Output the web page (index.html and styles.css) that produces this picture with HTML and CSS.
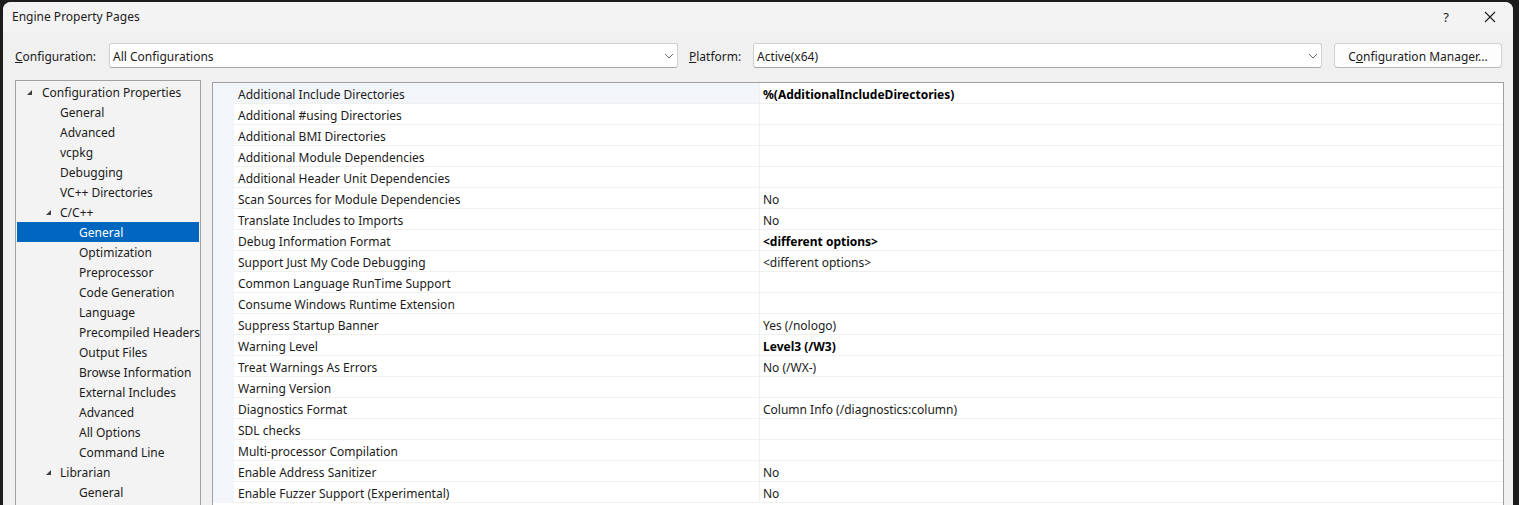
FILE: index.html
```html
<!DOCTYPE html>
<html>
<head>
<meta charset="utf-8">
<link rel="stylesheet" href="styles.css">
</head>
<body>
<div class="dialog">
  <div class="titlebar">
    <span class="title">Engine Property Pages</span>
    <span class="tb-btns">
      <span class="help">?</span>
      <svg class="close" width="12" height="12" viewBox="0 0 12 12"><path d="M1 1 L11 11 M11 1 L1 11" stroke="#1a1a1a" stroke-width="1.1" fill="none"/></svg>
    </span>
  </div>
  <div class="toolbar">
    <span class="label label-config"><u>C</u>onfiguration:</span>
    <div class="combo combo-config"><span class="combo-text">All Configurations</span>
      <svg class="chev" width="10" height="6" viewBox="0 0 10 6"><path d="M1 1 L5 5 L9 1" stroke="#6a6a6a" stroke-width="1" fill="none"/></svg>
    </div>
    <span class="label label-platform"><u>P</u>latform:</span>
    <div class="combo combo-platform"><span class="combo-text">Active(x64)</span>
      <svg class="chev" width="10" height="6" viewBox="0 0 10 6"><path d="M1 1 L5 5 L9 1" stroke="#6a6a6a" stroke-width="1" fill="none"/></svg>
    </div>
    <button class="btn">C<u>o</u>nfiguration Manager...</button>
  </div>
  <div class="content">
    <div class="tree">
      <div class="node l0"><span class="exp"></span>Configuration Properties</div>
      <div class="node l1">General</div>
      <div class="node l1">Advanced</div>
      <div class="node l1">vcpkg</div>
      <div class="node l1">Debugging</div>
      <div class="node l1">VC++ Directories</div>
      <div class="node l1"><span class="exp"></span>C/C++</div>
      <div class="node l2 selected">General</div>
      <div class="node l2">Optimization</div>
      <div class="node l2">Preprocessor</div>
      <div class="node l2">Code Generation</div>
      <div class="node l2">Language</div>
      <div class="node l2">Precompiled Headers</div>
      <div class="node l2">Output Files</div>
      <div class="node l2">Browse Information</div>
      <div class="node l2">External Includes</div>
      <div class="node l2">Advanced</div>
      <div class="node l2">All Options</div>
      <div class="node l2">Command Line</div>
      <div class="node l1"><span class="exp"></span>Librarian</div>
      <div class="node l2">General</div>
    </div>
    <div class="grid">
      <div class="row first"><span class="gut"></span><span class="name">Additional Include Directories</span><span class="val bold">%(AdditionalIncludeDirectories)</span></div>
      <div class="row"><span class="gut"></span><span class="name">Additional #using Directories</span><span class="val"></span></div>
      <div class="row"><span class="gut"></span><span class="name">Additional BMI Directories</span><span class="val"></span></div>
      <div class="row"><span class="gut"></span><span class="name">Additional Module Dependencies</span><span class="val"></span></div>
      <div class="row"><span class="gut"></span><span class="name">Additional Header Unit Dependencies</span><span class="val"></span></div>
      <div class="row"><span class="gut"></span><span class="name">Scan Sources for Module Dependencies</span><span class="val">No</span></div>
      <div class="row"><span class="gut"></span><span class="name">Translate Includes to Imports</span><span class="val">No</span></div>
      <div class="row"><span class="gut"></span><span class="name">Debug Information Format</span><span class="val bold">&lt;different options&gt;</span></div>
      <div class="row"><span class="gut"></span><span class="name">Support Just My Code Debugging</span><span class="val">&lt;different options&gt;</span></div>
      <div class="row"><span class="gut"></span><span class="name">Common Language RunTime Support</span><span class="val"></span></div>
      <div class="row"><span class="gut"></span><span class="name">Consume Windows Runtime Extension</span><span class="val"></span></div>
      <div class="row"><span class="gut"></span><span class="name">Suppress Startup Banner</span><span class="val">Yes (/nologo)</span></div>
      <div class="row"><span class="gut"></span><span class="name">Warning Level</span><span class="val bold">Level3 (/W3)</span></div>
      <div class="row"><span class="gut"></span><span class="name">Treat Warnings As Errors</span><span class="val">No (/WX-)</span></div>
      <div class="row"><span class="gut"></span><span class="name">Warning Version</span><span class="val"></span></div>
      <div class="row"><span class="gut"></span><span class="name">Diagnostics Format</span><span class="val">Column Info (/diagnostics:column)</span></div>
      <div class="row"><span class="gut"></span><span class="name">SDL checks</span><span class="val"></span></div>
      <div class="row"><span class="gut"></span><span class="name">Multi-processor Compilation</span><span class="val"></span></div>
      <div class="row"><span class="gut"></span><span class="name">Enable Address Sanitizer</span><span class="val">No</span></div>
      <div class="row"><span class="gut"></span><span class="name">Enable Fuzzer Support (Experimental)</span><span class="val">No</span></div>
    </div>
  </div>
</div>
</body>
</html>
```
FILE: styles.css
```css
html, body {
  margin: 0;
  padding: 0;
  height: 100%;
  overflow: hidden;
}
body {
  background: #1c1c1c;
  padding: 2px 0 0 3px;
  box-sizing: border-box;
  font-family: "Segoe UI", "Noto Sans", "Open Sans", sans-serif;
  font-size: 12px;
  color: #1b1b1b;
}
.dialog {
  width: 1510px;
  height: 600px;
  background: #f0f0f0;
  border-radius: 8px 8px 0 0;
  overflow: hidden;
}
.titlebar {
  height: 30px;
  background: #f3f3f3;
  display: flex;
  align-items: center;
  justify-content: space-between;
  padding-left: 9px;
}
.title {
  font-size: 12px;
  margin-top: -1px;
}
.tb-btns {
  display: flex;
  align-items: center;
}
.help {
  font-size: 13px;
  margin-right: 35px;
}
.close {
  margin-right: 17px;
}
.toolbar {
  display: flex;
  align-items: center;
  margin-top: 11px;
  height: 25px;
  padding-left: 12px;
}
.label {
  line-height: 25px;
  padding-top: 2px;
}
.label-config {
  width: 94px;
}
.label-platform {
  margin-left: 11px;
  width: 64px;
}
.combo {
  box-sizing: border-box;
  height: 25px;
  width: 569px;
  background: #ffffff;
  border: 1px solid #d0d0d0;
  border-bottom-color: #a8a8a8;
  border-radius: 3px;
  display: flex;
  align-items: center;
  justify-content: space-between;
  padding-left: 3px;
  padding-right: 3px;
}
.combo-text {
  padding-top: 2px;
}
.chev {
  margin-top: 1px;
}
.btn {
  box-sizing: border-box;
  margin-left: 12px;
  width: 168px;
  height: 25px;
  background: #fdfdfd;
  border: 1px solid #d0d0d0;
  border-bottom-color: #b8b8b8;
  border-radius: 4px;
  font-family: inherit;
  font-size: 12px;
  color: #1b1b1b;
  padding: 2px 0 0 0;
}
.content {
  display: flex;
  margin-top: 12px;
  padding-left: 12px;
  align-items: flex-start;
}
.tree {
  box-sizing: border-box;
  width: 186px;
  height: 440px;
  border: 1px solid #a0a0a0;
  background: #f3f3f3;
  padding: 1px 0 0 1px;
  overflow: hidden;
  white-space: nowrap;
}
.node {
  box-sizing: border-box;
  height: 20px;
  line-height: 20px;
  padding-top: 1px;
  position: relative;
  width: 182px;
}
.l0 { padding-left: 25px; }
.l1 { padding-left: 43px; }
.l2 { padding-left: 62px; }
.node.selected {
  background: #0067c0;
  color: #ffffff;
}
.exp {
  position: absolute;
  top: 8px;
  width: 0;
  height: 0;
  border-left: 5px solid transparent;
  border-bottom: 5px solid #404040;
}
.l0 .exp { left: 10px; }
.l1 .exp { left: 29px; }
.grid {
  box-sizing: border-box;
  margin-top: 2px;
  margin-left: 11px;
  width: 1292px;
  height: 440px;
  border: 1px solid #a0a0a0;
  background: #ffffff;
  overflow: hidden;
}
.row {
  display: grid;
  grid-template-columns: 21px 525px 1fr;
  height: 21px;
  white-space: nowrap;
}
.gut {
  background: #f2f5fa;
}
.name, .val {
  box-sizing: border-box;
  border-bottom: 1px solid #f0f0f0;
  line-height: 19px;
  height: 21px;
  padding-top: 2px;
}
.name {
  padding-left: 4px;
}
.val {
  border-left: 1px solid #f0f0f0;
  padding-left: 3px;
}
.row.first .name {
  background: #f2f5fa;
}
.bold {
  font-weight: bold;
  color: #000000;
}
```
